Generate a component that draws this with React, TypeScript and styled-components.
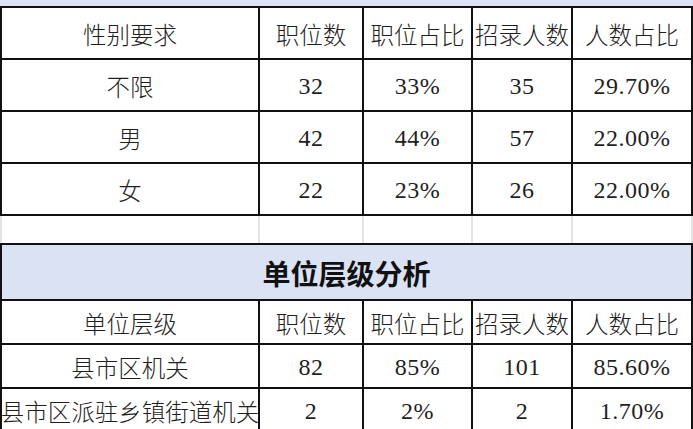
import styled, { createGlobalStyle } from "styled-components";

const GlobalStyle = createGlobalStyle`
  html, body {
    margin: 0;
    padding: 0;
    background: #ffffff;
  }
  body {
    font-family: "Liberation Serif", "Noto Sans CJK SC", serif;
    color: #1f1f1f;
  }
`;

const COLUMNS = "258px 104px 109px 100px 120px";

const genderRows = [
  ["不限", "32", "33%", "35", "29.70%"],
  ["男", "42", "44%", "57", "22.00%"],
  ["女", "22", "23%", "26", "22.00%"],
];

const levelRows = [
  ["县市区机关", "82", "85%", "101", "85.60%"],
  ["县市区派驻乡镇街道机关", "2", "2%", "2", "1.70%"],
];

const headers = ["职位数", "职位占比", "招录人数", "人数占比"];

export default function App() {
  return (
    <>
      <GlobalStyle />
      <Sheet>
        <TopStrip />
        <Grid $rowHeight={52}>
          <Cell>性别要求</Cell>
          {headers.map((h) => (
            <Cell key={h}>{h}</Cell>
          ))}
          {genderRows.map((row) =>
            row.map((value, i) => (
              <Cell key={row[0] + i} $numeric={i > 0}>
                {value}
              </Cell>
            ))
          )}
        </Grid>

        <BlankRow>
          {[0, 1, 2, 3, 4].map((i) => (
            <BlankCell key={i} />
          ))}
        </BlankRow>

        <TitleBar>单位层级分析</TitleBar>
        <Grid $rowHeight={44} $noTop>
          <Cell>单位层级</Cell>
          {headers.map((h) => (
            <Cell key={h}>{h}</Cell>
          ))}
          {levelRows.map((row) =>
            row.map((value, i) => (
              <Cell key={row[0] + i} $numeric={i > 0}>
                {value}
              </Cell>
            ))
          )}
        </Grid>
      </Sheet>
    </>
  );
}

const Sheet = styled.div`
  width: 693px;
  height: 429px;
  overflow: hidden;
  display: flex;
  flex-direction: column;
`;

const TopStrip = styled.div`
  height: 6px;
  flex-shrink: 0;
  background: #dae2f4;
`;

const Grid = styled.div<{ $rowHeight: number; $noTop?: boolean }>`
  display: grid;
  grid-template-columns: ${COLUMNS};
  grid-auto-rows: ${({ $rowHeight }) => $rowHeight}px;
  border-top: ${({ $noTop }) => ($noTop ? "none" : "2px solid #111")};
  border-left: 2px solid #111;
  flex-shrink: 0;
`;

const Cell = styled.div<{ $numeric?: boolean }>`
  display: flex;
  align-items: center;
  justify-content: center;
  box-sizing: border-box;
  border-right: 2px solid #111;
  border-bottom: 2px solid #111;
  white-space: nowrap;
  overflow: visible;
  font-family: ${({ $numeric }) =>
    $numeric
      ? `"Tinos", "Liberation Serif", "DejaVu Serif", serif`
      : `"Noto Sans CJK SC", sans-serif`};
  font-size: ${({ $numeric }) => ($numeric ? "24px" : "23.5px")};
  font-weight: ${({ $numeric }) => ($numeric ? 400 : 300)};
  letter-spacing: ${({ $numeric }) => ($numeric ? "0.5px" : "0")};
  padding-top: 2px;
`;

const TitleBar = styled.div`
  display: flex;
  align-items: center;
  justify-content: center;
  box-sizing: border-box;
  height: 58px;
  flex-shrink: 0;
  background: #dae2f4;
  border: 2px solid #111;
  font-family: "Noto Sans CJK SC", sans-serif;
  font-size: 28px;
  font-weight: 700;
  color: #111;
  padding-top: 2px;
`;

const BlankRow = styled.div`
  display: grid;
  grid-template-columns: ${COLUMNS};
  height: 27px;
  border-left: 2px solid #e4e4e4;
  flex-shrink: 0;
`;

const BlankCell = styled.div`
  box-sizing: border-box;
  border-right: 2px solid #e4e4e4;
`;
